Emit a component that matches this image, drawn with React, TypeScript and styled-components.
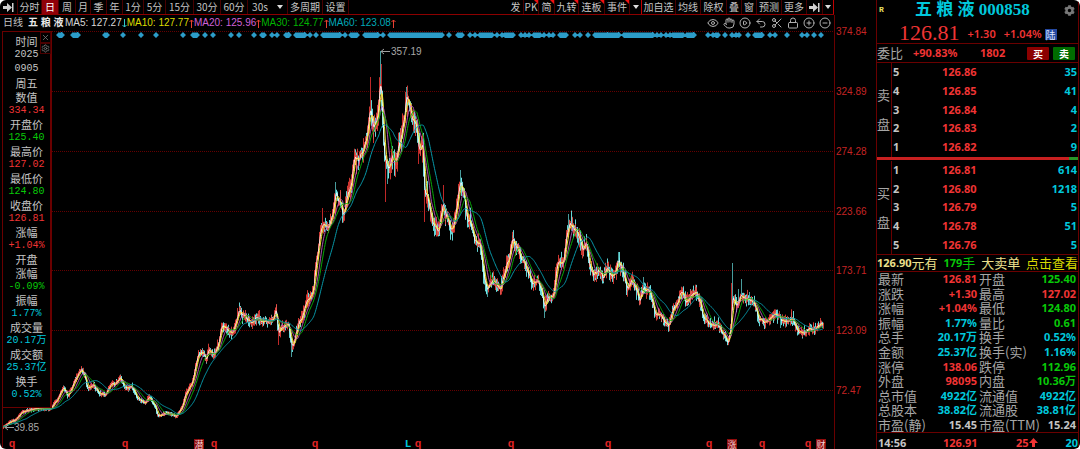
import React from "react";
import styled, { createGlobalStyle, css } from "styled-components";
import {
  Eye,
  Hand,
  CirclePlay,
  Undo2,
  Scissors,
  Lock,
  CirclePlus,
  CircleMinus,
  X,
  Settings,
} from "lucide-react";
import { FaCog } from "react-icons/fa";

const color = {
  red: "#f03434",
  dimRed: "#c62424",
  green: "#08c808",
  cyan: "#00c8dc",
  white: "#c4c4c4",
  grey: "#a6a6a6",
  yellow: "#d8d800",
  pale: "#ece08c",
  line: "#6a0000",
};

type Tone = "red" | "green" | "cyan" | "white" | "grey" | "yellow" | "pale";

const sans = '"Liberation Sans", "Noto Sans CJK SC", sans-serif';
const cjk = '"Noto Sans CJK SC", sans-serif';
const figures = '"Noto Sans", "Noto Sans CJK SC", sans-serif';
const mono = '"Liberation Mono", "Noto Sans CJK SC", monospace';
const serif = '"Liberation Serif", "Noto Sans CJK SC", serif';

const GlobalStyle = createGlobalStyle`
  * { box-sizing: border-box; }
  body { margin: 0; background: #fff; }
  button { border: 0; margin: 0; padding: 0; background: none; cursor: pointer; }
`;

/* ---------- page ---------- */

const Terminal = styled.div`
  display: grid;
  grid-template-columns: minmax(0, 1fr) 204px;
  min-height: 100vh;
  border-radius: 6px;
  overflow: hidden;
  background: #000;
  color: ${color.white};
  font-family: ${sans};
  font-size: 10px;
  white-space: nowrap;
`;

const ChartColumn = styled.main`
  display: flex;
  flex-direction: column;
  min-width: 0;
`;

/* ---------- toolbar ---------- */

const Toolbar = styled.nav`
  display: flex;
  justify-content: space-between;
  height: 15px;
  margin-right: 42px;
  border-bottom: 1px solid #8c0000;
`;

const ToolGroup = styled.div`
  display: flex;
`;

const ToolButton = styled.button<{ $w: number; $active?: boolean; $flag?: boolean; $strong?: boolean }>`
  position: relative;
  display: flex;
  align-items: center;
  justify-content: center;
  gap: 9px;
  width: ${(p) => p.$w}px;
  height: 14px;
  border-right: 1px solid ${(p) => (p.$strong ? "#c00000" : "#480000")};
  background: ${(p) => (p.$active ? "#900008" : "transparent")};
  color: ${(p) => (p.$active ? "#fff" : color.white)};
  font: 10px/14px ${cjk};
  ${(p) =>
    p.$flag &&
    css`
      &::after {
        content: "";
        position: absolute;
        top: 0;
        right: 0;
        border-top: 4px solid #f01010;
        border-left: 4px solid transparent;
      }
    `}
`;

const Caret = styled.span`
  border: 3px solid transparent;
  border-top: 4px solid #ddd;
  border-bottom: 0;
`;

const SkipIcon = () => (
  <svg width="11" height="9" viewBox="0 0 11 9" fill="#d0d0d0" aria-hidden="true">
    <path d="M0 3h4V0l5 4.500L4 9V6H0z" />
    <path d="M9 0h1.500v9H9z" />
  </svg>
);

/* ---------- legend ---------- */

const Legend = styled.header`
  display: flex;
  align-items: center;
  height: 16px;
  margin-right: 42px;
  padding: 0 3px;
  font: 10px/16px ${sans};
`;

const Period = styled.span`
  width: 25px;
`;

const StockName = styled.strong`
  width: 37px;
  color: #e8e8e8;
`;

const Average = styled.span<{ $color: string }>`
  display: flex;
  align-items: center;
  color: ${(p) => p.$color};
`;

const ChartTools = styled.div`
  display: flex;
  gap: 4px;
  margin-left: auto;
`;

const ChartTool = styled.button`
  display: flex;
  width: 12px;
  height: 12px;
  color: #b0b0b0;
`;

const Arrow = ({ up }: { up: boolean }) => (
  <svg width="5" height="9" viewBox="0 0 5 9" fill="none" stroke={up ? "#e84030" : "#30c8c8"} aria-hidden="true">
    <path d={up ? "M2.500 9V1M.5 3l2-2 2 2" : "M2.500 0v8M.5 6l2 2 2-2"} />
  </svg>
);

/* ---------- chart ---------- */

const ChartArea = styled.section`
  position: relative;
`;

const ChartSvg = styled.svg`
  display: block;
  width: 100%;
  height: auto;
  overflow: visible;
  font-family: ${sans};
  font-size: 10px;
`;

const InfoPanel = styled.aside`
  position: absolute;
  top: 0;
  left: 2px;
  width: 50px;
  padding: 2px 0 6px;
  border: 1px solid ${color.line};
  border-right-width: 2px;
  background: #000;
  text-align: center;
`;

const InfoList = styled.div`
  display: flex;
  flex-direction: column;
`;

const InfoLabel = styled.span`
  font: 11px/14px ${cjk};
`;

const InfoDate = styled.span`
  font: 10px/14px ${mono};
`;

const InfoValue = styled.span<{ $tone: Tone }>`
  color: ${(p) => color[p.$tone]};
  font: 10px/13px ${mono};
`;

const InfoTools = styled.div`
  position: absolute;
  top: 0;
  right: -1px;
  display: grid;
`;

const InfoTool = styled.button`
  display: flex;
  align-items: center;
  justify-content: center;
  width: 11px;
  height: 11px;
  border: 1px solid #4a0000;
  color: #808080;
`;

/* ---------- quote panel ---------- */

const QuotePanel = styled.aside`
  display: flex;
  flex-direction: column;
  margin-right: 1px;
  border: solid ${color.line};
  border-width: 0 1px;
  font: bold 11px/14px ${figures};
`;

const TitleRow = styled.header`
  display: grid;
  grid-template-columns: 36px 1fr 14px;
  align-items: center;
  height: 20px;
  padding-left: 2px;
`;

const MarginTag = styled.span`
  color: #e8e060;
  font: bold 8px/12px ${mono};
`;

const Title = styled.h1`
  margin: 0;
  color: ${color.cyan};
  font: bold 17px/20px ${serif};
`;

const GearButton = styled.button`
  display: flex;
  color: #787878;
`;

const PriceRow = styled.div`
  display: flex;
  align-items: center;
  gap: 8px;
  height: 24px;
  padding: 2px 0 0 22px;
  border-bottom: 1px solid ${color.line};
  color: ${color.red};
`;

const LastPrice = styled.strong`
  font: 22px/22px ${serif};
`;

const Change = styled.span`
  padding-top: 3px;
  font: 600 11px/14px ${figures};
`;

const Badge = styled.span`
  margin: 3px 0 0 -5px;
  padding: 0 1px;
  background: #2448a0;
  color: #dfe6ff;
  font: 10px/11px ${cjk};
`;

const RatioRow = styled.div`
  display: grid;
  grid-template-columns: 36px 67px 47px 22px 26px;
  align-items: center;
  height: 19px;
  border-bottom: 1px solid ${color.line};
  color: ${color.red};
`;

const RowLabel = styled.span`
  color: ${color.grey};
  font: 13px/14px ${cjk};
`;

const TradeButton = styled.button<{ $side: "buy" | "sell" }>`
  width: 22px;
  height: 13px;
  justify-self: end;
  border-radius: 1px;
  background: ${(p) => (p.$side === "buy" ? "#8c0000" : "#006c00")};
  color: #fff;
  font: bold 10px/13px ${cjk};
`;

const Book = styled.section`
  display: grid;
  grid-template-columns: 15px 1fr;
  flex: 94 0 90px;
`;

const BookSide = styled.h2`
  display: flex;
  flex-direction: column;
  justify-content: center;
  gap: 15px;
  margin: 0;
  border-right: 1px solid ${color.line};
  color: ${color.grey};
  font: 13px/14px ${cjk};
`;

const BookTable = styled.table`
  display: grid;
`;

const BookBody = styled.tbody`
  display: grid;
  grid-auto-rows: 1fr;
`;

const BookRow = styled.tr`
  display: grid;
  grid-template-columns: 49px 1fr auto;
  align-items: center;
  padding: 0 1px;
`;

const Cell = styled.td<{ $tone: Tone; $end?: boolean }>`
  padding: 0;
  color: ${(p) => color[p.$tone]};
  font: bold 11px/14px ${figures};
  text-align: ${(p) => (p.$end ? "right" : "left")};
`;

const PressureBar = styled.div`
  display: grid;
  grid-template-columns: 193fr 9fr;
  height: 3px;
  margin-bottom: 1px;
  background: #c82020;
  &::after {
    content: "";
    grid-column: 2;
    background: #289828;
  }
`;

const Notice = styled.div`
  display: flex;
  align-items: center;
  justify-content: space-between;
  height: 18px;
  border: solid ${color.line};
  border-width: 1px 0;
`;

const NoticeText = styled.span<{ $tone: Tone }>`
  display: flex;
  align-items: center;
  color: ${(p) => color[p.$tone]};
`;

const Han = styled.span`
  font: 13px/14px ${cjk};
`;

const NoticeLink = styled.a`
  color: ${color.yellow};
  font: 13px/14px ${cjk};
  text-decoration: none;
`;

const Details = styled.table`
  display: grid;
  flex: 159 0 154px;
`;

const DetailBody = styled.tbody`
  display: grid;
  grid-auto-rows: 1fr;
`;

const DetailRow = styled.tr`
  display: grid;
  grid-template-columns: 50px 51px 49px 1fr;
  align-items: center;
  padding-left: 1px;
`;

const DetailLabel = styled.th`
  padding: 0;
  color: ${color.grey};
  font: 13px/14px ${cjk};
  text-align: left;
`;

const DetailValue = styled(Cell)`
  padding-right: 2px;
  text-align: right;
`;

const DealRow = styled.footer`
  display: grid;
  grid-template-columns: 65px 73px 1fr auto;
  align-items: center;
  height: 17px;
  padding: 3px 0 0 1px;
  border-top: 1px solid ${color.line};
  color: ${color.red};
`;

const Ink = styled.span<{ $tone: Tone }>`
  color: ${(p) => color[p.$tone]};
`;

/* ---------- data ---------- */

type Tool = { label: string; w: number; active?: boolean; flag?: boolean; strong?: boolean; caret?: boolean };

const leftTools: Tool[] = [
  { label: "分时", w: 24 },
  { label: "日", w: 17, active: true },
  { label: "周", w: 17 },
  { label: "月", w: 15 },
  { label: "季", w: 16 },
  { label: "年", w: 16 },
  { label: "1分", w: 21 },
  { label: "5分", w: 22 },
  { label: "15分", w: 28 },
  { label: "30分", w: 27 },
  { label: "60分", w: 27 },
  { label: "30s", w: 40, caret: true },
  { label: "多周期", w: 35 },
  { label: "设置", w: 26 },
];

const rightTools: Tool[] = [
  { label: "发", w: 16 },
  { label: "PK", w: 15, flag: true },
  { label: "简", w: 16, flag: true },
  { label: "九转", w: 24, flag: true },
  { label: "连板", w: 26, flag: true },
  { label: "事件", w: 25, flag: true },
  { label: "", w: 12, caret: true, strong: true },
  { label: "加自选", w: 34 },
  { label: "均线", w: 25 },
  { label: "除权", w: 26 },
  { label: "叠", w: 15 },
  { label: "窗", w: 15 },
  { label: "预测", w: 25 },
  { label: "更多", w: 25 },
];

const averages = [
  { text: "MA5: 127.27", color: "#d8d8d8", up: false },
  { text: "MA10: 127.77", color: "#dcdc00", up: true },
  { text: "MA20: 125.96", color: "#d060d8", up: true },
  { text: "MA30: 124.77", color: "#00b400", up: true },
  { text: "MA60: 123.08", color: "#00a8b8", up: true },
];

const chartTools = [
  { name: "显示", Icon: Eye },
  { name: "拖动", Icon: Hand },
  { name: "回放", Icon: CirclePlay },
  { name: "撤销", Icon: Undo2 },
  { name: "剪切", Icon: Scissors },
  { name: "锁定", Icon: Lock },
  { name: "放大", Icon: CirclePlus },
  { name: "缩小", Icon: CircleMinus },
];

const info: { text: string; kind: "label" | "date" | Tone }[] = [
  { text: "时间", kind: "label" },
  { text: "2025", kind: "date" },
  { text: "0905", kind: "date" },
  { text: "周五", kind: "label" },
  { text: "数值", kind: "label" },
  { text: "334.34", kind: "red" },
  { text: "开盘价", kind: "label" },
  { text: "125.40", kind: "green" },
  { text: "最高价", kind: "label" },
  { text: "127.02", kind: "red" },
  { text: "最低价", kind: "label" },
  { text: "124.80", kind: "green" },
  { text: "收盘价", kind: "label" },
  { text: "126.81", kind: "red" },
  { text: "涨幅", kind: "label" },
  { text: "+1.04%", kind: "red" },
  { text: "开盘", kind: "label" },
  { text: "涨幅", kind: "label" },
  { text: "-0.09%", kind: "green" },
  { text: "振幅", kind: "label" },
  { text: "1.77%", kind: "cyan" },
  { text: "成交量", kind: "label" },
  { text: "20.17万", kind: "cyan" },
  { text: "成交额", kind: "label" },
  { text: "25.37亿", kind: "cyan" },
  { text: "换手", kind: "label" },
  { text: "0.52%", kind: "cyan" },
];

const asks = [
  ["5", "126.86", "35"],
  ["4", "126.85", "41"],
  ["3", "126.84", "4"],
  ["2", "126.83", "2"],
  ["1", "126.82", "9"],
];

const bids = [
  ["1", "126.81", "614"],
  ["2", "126.80", "1218"],
  ["3", "126.79", "5"],
  ["4", "126.78", "51"],
  ["5", "126.76", "5"],
];

const details: [string, string, Tone, string, string, Tone][] = [
  ["最新", "126.81", "red", "开盘", "125.40", "green"],
  ["涨跌", "+1.30", "red", "最高", "127.02", "red"],
  ["涨幅", "+1.04%", "red", "最低", "124.80", "green"],
  ["振幅", "1.77%", "cyan", "量比", "0.61", "green"],
  ["总手", "20.17万", "cyan", "换手", "0.52%", "cyan"],
  ["金额", "25.37亿", "cyan", "换手(实)", "1.16%", "cyan"],
  ["涨停", "138.06", "red", "跌停", "112.96", "green"],
  ["外盘", "98095", "red", "内盘", "10.36万", "green"],
  ["总市值", "4922亿", "cyan", "流通值", "4922亿", "cyan"],
  ["总股本", "38.82亿", "cyan", "流通股", "38.81亿", "cyan"],
  ["市盈(静)", "15.45", "white", "市盈(TTM)", "15.24", "white"],
];

const levels: [number, string][] = [
  [31, "374.84"],
  [91, "324.89"],
  [151, "274.28"],
  [211, "223.66"],
  [270, "173.71"],
  [330, "123.09"],
  [390, "72.47"],
];

// Turning points of the closing price, in chart units.
const closes: [number, number][] = [
  [3,427],[10,422],[15,420],[22,412],[33,409],[50,409],[57,400],[63,388],[68,396],[75,380],[81,369],[85,377],[87,388],
  [93,385],[99,393],[105,395],[112,383],[115,385],[120,377],[125,388],[132,387],[137,398],[145,403],[149,397],[156,408],
  [157,416],[167,413],[176,416],[182,407],[185,395],[192,383],[195,368],[198,353],[203,353],[206,360],[208,350],[214,355],
  [218,345],[222,325],[227,330],[232,333],[235,325],[239,310],[243,315],[247,318],[251,323],[257,317],[263,322],[272,320],
  [276,310],[278,333],[283,327],[288,323],[292,348],[295,337],[298,325],[302,317],[306,302],[310,297],[313,290],[318,247],
  [322,223],[328,227],[332,217],[335,193],[340,203],[343,217],[347,197],[351,183],[354,157],[358,162],[363,150],[367,133],
  [370,107],[373,127],[377,120],[380,80],[382,110],[384,157],[388,170],[392,153],[395,163],[400,140],[403,123],[406,97],
  [409,107],[413,120],[417,130],[418,150],[423,147],[424,190],[427,197],[431,217],[434,227],[439,230],[443,203],[447,220],
  [451,230],[455,217],[460,180],[463,193],[467,217],[472,227],[474,240],[480,243],[483,273],[487,290],[493,280],[500,290],
  [505,270],[509,257],[512,240],[517,248],[522,260],[528,273],[532,285],[538,280],[542,293],[544,308],[548,297],[553,297],
  [557,263],[563,263],[567,233],[569,224],[573,227],[578,235],[583,250],[586,242],[589,263],[593,275],[598,270],[603,278],
  [607,267],[611,277],[615,273],[618,260],[623,273],[627,287],[632,280],[637,292],[639,302],[643,288],[650,293],[655,313],
  [660,315],[665,323],[669,325],[673,307],[677,305],[680,293],[683,293],[686,303],[691,295],[696,293],[700,303],[703,317],
  [708,323],[713,325],[718,325],[722,332],[728,343],[731,323],[732,296],[736,307],[741,293],[745,300],[750,300],[755,305],
  [758,318],[765,323],[770,318],[776,313],[781,320],[787,322],[791,317],[795,325],[799,333],[805,332],[810,328],[815,330],
  [820,324],[823,325],
];

// Long shadows that reach well past their neighbours: x, top, bottom, falling.
const shadows: [number, number, number, boolean][] = [
  [380, 51, 84, true],[381, 64, 100, false],[370, 77, 110, false],[385, 160, 202, false],[387, 160, 184, true],[406, 88, 100, true],
  [418, 140, 164, false],[424, 190, 222, false],[460, 170, 190, true],[443, 185, 205, false],[278, 330, 345, false],
  [291, 340, 357, true],[335, 182, 200, true],[322, 208, 230, false],[568, 214, 228, true],[618, 252, 266, true],
  [643, 277, 290, true],[732, 263, 304, true],[731, 283, 330, false],[741, 279, 296, true],[738, 289, 300, true],[780, 317, 328, true],
  [544, 305, 318, true],[487, 285, 297, true],[749, 292, 305, true],
];

const dots: [number, number][] = [
  [59,62],[73,73],[75,78],[105,107],[123,123],[141,141],[156,156],[183,183],[193,197],[205,205],[213,213],[231,231],
  [239,239],[254,254],[262,264],[272,272],[277,277],[286,289],[296,305],[310,310],[316,316],[323,340],[345,345],[351,357],
  [365,378],[383,383],[390,442],[449,449],[458,462],[470,470],[475,475],[480,492],[497,497],[502,502],[505,513],[521,521],
  [525,525],[529,529],[534,540],[544,544],[549,549],[553,553],[560,566],[575,575],[580,580],[588,588],[595,607],[608,619],
  [624,640],[642,653],[657,657],[661,661],[666,666],[670,670],[673,683],[687,694],[708,708],[713,713],[716,718],[725,725],
  [732,732],[736,736],[739,739],[748,748],[755,762],[770,770],[775,775],[787,787],[802,802],[807,807],[814,814],[821,821],
];

const events: [number, string][] = [
  [12, "q"],[125, "q"],[199, "潜"],[214, "q"],[315, "q"],[408, "L"],[418, "q"],[511, "q"],[608, "q"],[709, "q"],[732, "涨"],
  [762, "q"],[808, "q"],[821, "财"],
];

/* ---------- series ---------- */

function makeRandom(seed: number) {
  let s = seed;
  return () => {
    s = (s * 1664525 + 1013904223) % 4294967296;
    return s / 4294967296;
  };
}

function buildSeries() {
  const random = makeRandom(858);
  const points: { x: number; y: number; top: number; bottom: number; falling: boolean }[] = [];
  let k = 0;
  let previous = 427;
  for (let x = 3; x <= 823; x += 0.5) {
    while (k < closes.length - 2 && closes[k + 1][0] < x) k += 1;
    const [x0, y0] = closes[k];
    const [x1, y1] = closes[k + 1];
    const base = y0 + ((y1 - y0) * (x - x0)) / (x1 - x0);
    const amp = 0.6 + (430 - base) * 0.025;
    const y = base + (random() - 0.5) * amp * 1.4;
    const reach = amp * random() * random() * 2 + 0.8;
    const drop = amp * random() * random() * 2 + 0.8;
    points.push({
      x,
      y,
      top: Math.min(y, previous) - reach,
      bottom: Math.max(y, previous) + drop,
      falling: y > previous,
    });
    previous = y;
  }
  return points;
}

const series = buildSeries();

function averagePath(size: number) {
  let sum = 0;
  let d = "";
  series.forEach((p, i) => {
    sum += p.y;
    if (i >= size) sum -= series[i - size].y;
    d += `${i ? "L" : "M"}${p.x} ${(sum / Math.min(i + 1, size)).toFixed(1)}`;
  });
  return d;
}

function wickPath(falling: boolean) {
  return series
    .filter((p) => p.falling === falling)
    .map((p) => `M${Math.floor(p.x) + 0.5} ${p.top.toFixed(1)}V${p.bottom.toFixed(1)}`)
    .join("");
}

const diamonds = dots
  .flatMap(([from, to]) => {
    const xs: number[] = [];
    for (let x = from; x < to; x += 2) xs.push(x);
    return [...xs, to];
  })
  .map((x) => `M${x - 3} 35l3-3 3 3-3 3z`)
  .join("");

const Chart = () => (
  <ChartSvg viewBox="0 31 876 418" role="img" aria-label="五粮液 日线">
    {levels.map(([y, label]) => (
      <g key={label}>
        <path d={`M52 ${y + 0.5}H834`} stroke="#640000" strokeDasharray="1 1" shapeRendering="crispEdges" />
        <text x="836" y={y + 4} fill={color.dimRed}>
          {label}
        </text>
      </g>
    ))}
    <path d="M2.500 31V449M834.500 15V449" stroke={color.line} />
    <path d={diamonds} fill="#2c9cc8" />
    <path d={wickPath(true)} stroke="#70ecec" strokeOpacity="0.9" />
    <path d={wickPath(false)} stroke="#f04038" strokeOpacity="0.85" />
    {shadows.map(([x, top, bottom, falling]) => (
      <path key={x} d={`M${x + 0.5} ${top}V${bottom}`} stroke={falling ? "#489c9c" : "#c02828"} />
    ))}
    <g fill="none">
      <path d={averagePath(4)} stroke="#ffffff" strokeOpacity="0.9" />
      <path d={averagePath(8)} stroke="#f4ec30" />
      <path d={averagePath(16)} stroke="#c860c8" strokeOpacity="0.85" />
      <path d={averagePath(24)} stroke="#08a808" />
      <path d={averagePath(48)} stroke="#0898a8" />
      <path d="M390 51.500H381M384 49l-3 2.500 3 2.500M14 427.500H5M8 425l-3 2.500 3 2.500" stroke="#a0a0a0" />
    </g>
    <text x="391" y="55" fill="#a8a8a8">357.19</text>
    <text x="14" y="431" fill="#a8a8a8">39.85</text>
    {events.map(([x, label]) =>
      label.charCodeAt(0) > 255 ? (
        <g key={x}>
          <rect x={x - 5} y="439" width="10" height="10" fill="#900c0c" />
          <text x={x} y="448" fill="#f0d0d0" fontSize="9" textAnchor="middle">
            {label}
          </text>
        </g>
      ) : (
        <text
          key={x}
          x={x}
          y="447"
          fill={label === "L" ? color.cyan : "#e02424"}
          fontFamily={mono}
          fontWeight="bold"
          fontSize="11"
          textAnchor="middle"
        >
          {label}
        </text>
      )
    )}
  </ChartSvg>
);

const OrderBook = ({ side, rows }: { side: string; rows: string[][] }) => (
  <Book>
    <BookSide>
      <span>{side}</span>
      <span>盘</span>
    </BookSide>
    <BookTable>
      <BookBody>
        {rows.map(([level, price, volume]) => (
          <BookRow key={level}>
            <Cell $tone="white">{level}</Cell>
            <Cell $tone="red">{price}</Cell>
            <Cell $tone="cyan" $end>
              {volume}
            </Cell>
          </BookRow>
        ))}
      </BookBody>
    </BookTable>
  </Book>
);

const Tools = ({ items }: { items: Tool[] }) => (
  <>
    {items.map((t) => (
      <ToolButton
        key={t.label}
        $w={t.w}
        $active={t.active}
        $flag={t.flag}
        $strong={t.strong}
        aria-label={t.label || "更多事件"}
      >
        {t.label}
        {t.caret && <Caret />}
      </ToolButton>
    ))}
  </>
);

export default function App() {
  return (
    <>
      <GlobalStyle />
      <Terminal>
        <ChartColumn>
          <Toolbar>
            <ToolGroup>
              <ToolButton $w={18} aria-label="收起">
                <SkipIcon />
              </ToolButton>
              <Tools items={leftTools} />
            </ToolGroup>
            <ToolGroup>
              <Tools items={rightTools} />
              <ToolButton $w={16} aria-label="展开">
                <SkipIcon />
              </ToolButton>
              <ToolButton $w={11} $strong aria-label="菜单">
                <Caret />
              </ToolButton>
            </ToolGroup>
          </Toolbar>

          <Legend>
            <Period>日线</Period>
            <StockName>五 粮 液</StockName>
            {averages.map((a) => (
              <Average key={a.text} $color={a.color}>
                {a.text}
                <Arrow up={a.up} />
              </Average>
            ))}
            <ChartTools>
              {chartTools.map(({ name, Icon }) => (
                <ChartTool key={name} aria-label={name}>
                  <Icon size={12} strokeWidth={2} />
                </ChartTool>
              ))}
            </ChartTools>
          </Legend>

          <ChartArea>
            <Chart />
            <InfoPanel>
              <InfoList>
                {info.map(({ text, kind }, i) =>
                  kind === "label" ? (
                    <InfoLabel key={i}>{text}</InfoLabel>
                  ) : kind === "date" ? (
                    <InfoDate key={i}>{text}</InfoDate>
                  ) : (
                    <InfoValue key={i} $tone={kind}>
                      {text}
                    </InfoValue>
                  )
                )}
              </InfoList>
              <InfoTools>
                <InfoTool aria-label="关闭">
                  <X size={9} />
                </InfoTool>
                <InfoTool aria-label="面板设置">
                  <Settings size={9} />
                </InfoTool>
              </InfoTools>
            </InfoPanel>
          </ChartArea>
        </ChartColumn>

        <QuotePanel>
          <TitleRow>
            <MarginTag>R</MarginTag>
            <Title>五 粮 液 000858</Title>
            <GearButton aria-label="设置">
              <FaCog size={11} />
            </GearButton>
          </TitleRow>
          <PriceRow>
            <LastPrice>126.81</LastPrice>
            <Change>+1.30</Change>
            <Change>+1.04%</Change>
            <Badge>陆</Badge>
          </PriceRow>
          <RatioRow>
            <RowLabel>委比</RowLabel>
            <span>+90.83%</span>
            <span>1802</span>
            <TradeButton $side="buy">买</TradeButton>
            <TradeButton $side="sell">卖</TradeButton>
          </RatioRow>

          <OrderBook side="卖" rows={asks} />
          <PressureBar />
          <OrderBook side="买" rows={bids} />

          <Notice>
            <NoticeText $tone="pale">
              126.90<Han>元有</Han>
            </NoticeText>
            <NoticeText $tone="green">
              179<Han>手</Han>
            </NoticeText>
            <NoticeText $tone="pale">
              <Han>大卖单</Han>
            </NoticeText>
            <NoticeLink href="#orders">点击查看</NoticeLink>
          </Notice>

          <Details>
            <DetailBody>
              {details.map(([l1, v1, t1, l2, v2, t2]) => (
                <DetailRow key={l1}>
                  <DetailLabel scope="row">{l1}</DetailLabel>
                  <DetailValue $tone={t1}>{v1}</DetailValue>
                  <DetailLabel scope="row">{l2}</DetailLabel>
                  <DetailValue $tone={t2}>{v2}</DetailValue>
                </DetailRow>
              ))}
            </DetailBody>
          </Details>

          <DealRow>
            <Ink $tone="white">14:56</Ink>
            <span>126.91</span>
            <span>
              25
              <svg width="9" height="9" viewBox="0 0 9 9" fill={color.red} aria-hidden="true">
                <path d="M4.500 0L9 5H6v4H3V5H0z" />
              </svg>
            </span>
            <Ink $tone="cyan">20</Ink>
          </DealRow>
        </QuotePanel>
      </Terminal>
    </>
  );
}
